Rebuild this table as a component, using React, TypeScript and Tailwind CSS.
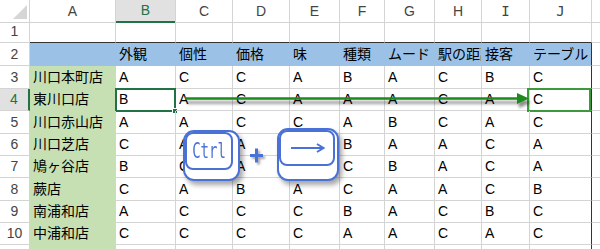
import React from "react";

const GRID = "grid grid-cols-[30px_86px_60px_57px_57px_50px_45px_50px_47px_48px_62px_8px]";
const FONT = "font-['Liberation_Sans','Noto_Sans_CJK_JP',sans-serif]";

const letters = ["A", "B", "C", "D", "E", "F", "G", "H", "I", "J"];
const headings = ["", "外観", "個性", "価格", "味", "種類", "ムード", "駅の距離", "接客", "テーブル"];

const shops: string[][] = [
  ["川口本町店", "A", "C", "C", "A", "B", "A", "C", "B", "C"],
  ["東川口店", "B", "A", "C", "A", "A", "A", "C", "A", "C"],
  ["川口赤山店", "A", "A", "C", "C", "A", "B", "C", "A", "C"],
  ["川口芝店", "C", "A", "A", "A", "B", "A", "A", "C", "A"],
  ["鳩ヶ谷店", "B", "C", "A", "C", "C", "B", "A", "C", "A"],
  ["蕨店", "C", "A", "B", "A", "C", "A", "A", "C", "B"],
  ["南浦和店", "A", "C", "C", "C", "B", "A", "C", "B", "C"],
  ["中浦和店", "C", "C", "C", "C", "A", "A", "C", "A", "C"],
];

// heights for rows 3..10
const dataHeights = ["h-[23px]", "h-[22px]", "h-[23px]", "h-[22px]", "h-[22px]", "h-[23px]", "h-[22px]", "h-[22px]"];

function RowHead({ n, active }: { n: string; active?: boolean }) {
  return (
    <div
      className={`flex items-center justify-center border-b border-[#d4d4d4] text-[14px] ${
        active
          ? "border-r-2 border-r-[#217346] bg-[#e1e1e1] text-[#217346]"
          : "border-r border-r-[#d4d4d4] text-[#444]"
      }`}
    >
      {n}
    </div>
  );
}

export default function App() {
  return (
    <div className={`relative h-[249px] w-[600px] overflow-hidden bg-white text-black ${FONT}`}>
      {/* column headers */}
      <div className={`${GRID} h-[21px]`}>
        <div className="relative border-b border-r border-[#d4d4d4]">
          <svg className="absolute left-0 top-0" width="30" height="21">
            <polygon points="27,5 27,19 13,19" fill="#d6d6d6" />
          </svg>
        </div>
        {letters.map((l) => (
          <div
            key={l}
            className={`flex items-center justify-center text-[14px] ${
              l === "B"
                ? "border-b-2 border-r border-b-[#217346] border-r-[#d4d4d4] bg-[#e1e1e1] text-[#217346]"
                : "border-b border-r border-[#d4d4d4] text-[#444]"
            } ${l === "I" || l === "J" ? "font-['DejaVu_Sans_Mono',monospace] text-[13px]" : ""}`}
          >
            {l}
          </div>
        ))}
        <div className="border-b border-[#d4d4d4]" />
      </div>

      {/* row 1 */}
      <div className={`${GRID} h-[22px]`}>
        <RowHead n="1" />
        {letters.map((l) => (
          <div key={l} className="border-b border-r border-b-[#333] border-r-[#d4d4d4]" />
        ))}
        <div className="border-b border-[#d4d4d4]" />
      </div>

      {/* row 2 — headings */}
      <div className={`${GRID} h-[23px]`}>
        <RowHead n="2" />
        {headings.map((h, i) => (
          <div
            key={i}
            className={`flex items-center overflow-hidden whitespace-nowrap border-b border-r border-b-[#9bc2e6] bg-[#9bc2e6] pl-[3px] text-[14px] ${
              i === 9 ? "border-r-[#333]" : "border-r-[#9bc2e6]"
            }`}
          >
            {h}
          </div>
        ))}
        <div className="border-b border-[#d4d4d4]" />
      </div>

      {/* rows 3..10 */}
      {shops.map((row, r) => (
        <div key={r} className={`${GRID} ${dataHeights[r]}`}>
          <RowHead n={String(r + 3)} active={r === 1} />
          {row.map((v, c) => (
            <div
              key={c}
              className={`relative flex items-center whitespace-nowrap border-b border-r pl-[3px] text-[14px] ${
                c === 0
                  ? "border-[#c6e0b4] bg-[#c6e0b4]"
                  : c === 9
                    ? "border-b-[#d4d4d4] border-r-[#333]"
                    : "border-[#d4d4d4]"
              }`}
            >
              {v}
              {r === 1 && c === 1 ? (
                <div className="absolute -left-px -top-px h-[24px] w-[61px] border-2 border-[#217346]">
                  <div className="absolute -bottom-[4px] -right-[4px] h-[6px] w-[6px] border border-white bg-[#217346]" />
                </div>
              ) : null}
              {r === 1 && c === 9 ? (
                <div className="absolute -left-[3px] -top-px h-[24px] w-[64px] border-2 border-[#3c9a3c]" />
              ) : null}
            </div>
          ))}
          <div className="border-b border-[#d4d4d4]" />
        </div>
      ))}

      {/* row 11 (cut off) */}
      <div className={`${GRID} h-[4px]`}>
        <div className="border-r border-[#d4d4d4]" />
        {letters.map((l, c) => (
          <div
            key={l}
            className={
              c === 0
                ? "bg-[#c6e0b4]"
                : c === 9
                  ? "border-r border-r-[#333]"
                  : "border-r border-[#d4d4d4]"
            }
          />
        ))}
        <div />
      </div>

      {/* green arrow across row 4 */}
      <svg className="pointer-events-none absolute left-0 top-0" width="600" height="249">
        <defs>
          <filter id="sh" x="-5%" y="-200%" width="110%" height="500%">
            <feDropShadow dx="2" dy="4" stdDeviation="1.6" floodColor="#000" floodOpacity="0.45" />
          </filter>
        </defs>
        <g filter="url(#sh)">
          <line x1="185" y1="98.5" x2="519" y2="98.5" stroke="#1e8a1e" strokeWidth="2.5" />
          <polygon points="517,93 529,98.5 517,104" fill="#1e8a1e" />
        </g>
      </svg>

      {/* Ctrl key */}
      <div className="absolute left-[183px] top-[130px] h-[51px] w-[57px] rounded-[11px] border-2 border-[#4a72d6] bg-white shadow-[3px_4px_5px_rgba(0,0,0,0.35)]">
        <div className="absolute left-0 top-0 flex h-[38px] w-[48px] items-center justify-center rounded-[8px] border-2 border-[#4a72d6]">
          <span className="inline-block scale-y-[1.45] font-['DejaVu_Sans_Mono',monospace] text-[14px] leading-none text-[#4a72d6]">
            Ctrl
          </span>
        </div>
      </div>

      {/* plus */}
      <svg className="pointer-events-none absolute left-[246px] top-[145px]" width="24" height="24">
        <defs>
          <filter id="psh" x="-50%" y="-50%" width="200%" height="200%">
            <feDropShadow dx="2" dy="2" stdDeviation="1.2" floodColor="#000" floodOpacity="0.35" />
          </filter>
        </defs>
        <g filter="url(#psh)" stroke="#4a72d6" strokeWidth="3">
          <line x1="4" y1="10.5" x2="17" y2="10.5" />
          <line x1="10.5" y1="3.5" x2="10.5" y2="17.5" />
        </g>
      </svg>

      {/* arrow key */}
      <div className="absolute left-[277px] top-[128px] h-[53px] w-[62px] rounded-[11px] border-2 border-[#4a72d6] bg-white shadow-[3px_4px_5px_rgba(0,0,0,0.35)]">
        <div className="absolute left-0 top-0 flex h-[36px] w-[56px] items-center justify-center rounded-[8px] border-2 border-[#4a72d6]">
          <svg width="40" height="12" viewBox="0 0 40 12">
            <line x1="4" y1="6" x2="36" y2="6" stroke="#4a72d6" strokeWidth="2" />
            <polyline points="30,2 36.5,6 30,10" fill="none" stroke="#4a72d6" strokeWidth="2" />
          </svg>
        </div>
      </div>
    </div>
  );
}
